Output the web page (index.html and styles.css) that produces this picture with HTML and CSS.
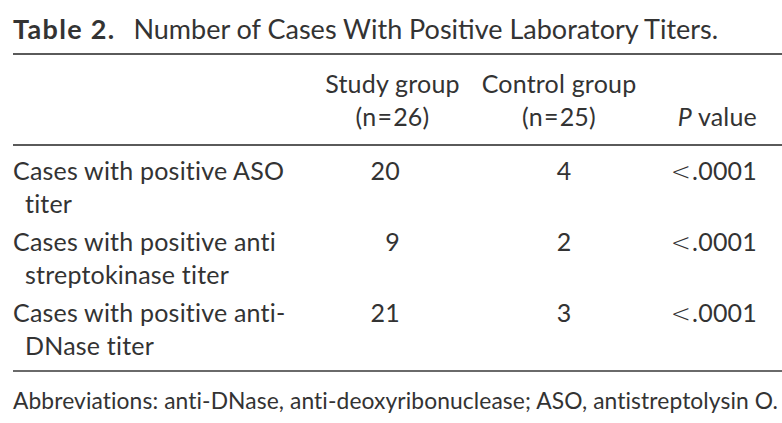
FILE: index.html
```html
<!DOCTYPE html>
<html>
<head>
<meta charset="utf-8">
<link rel="stylesheet" href="styles.css">
</head>
<body>
<div class="page">
  <div class="title"><span class="label">Table 2.</span>Number of Cases With Positive Laboratory Titers.</div>
  <div class="table">
    <div class="row head">
      <div class="c1"></div>
      <div class="c2 hcell">Study group<br>(n<span class="eq">=</span>26)</div>
      <div class="c3 hcell">Control group<br>(n<span class="eq">=</span>25)</div>
      <div class="c4 hcell pv"><i>P</i> value</div>
    </div>
    <div class="body">
      <div class="row">
        <div class="c1 lbl">Cases with positive ASO titer</div>
        <div class="c2 num">20</div>
        <div class="c3 num">4</div>
        <div class="c4 p"><span class="lt">&lt;</span>.0001</div>
      </div>
      <div class="row">
        <div class="c1 lbl">Cases with positive anti streptokinase titer</div>
        <div class="c2 num">9</div>
        <div class="c3 num">2</div>
        <div class="c4 p"><span class="lt">&lt;</span>.0001</div>
      </div>
      <div class="row">
        <div class="c1 lbl">Cases with positive anti-<br>DNase titer</div>
        <div class="c2 num">21</div>
        <div class="c3 num">3</div>
        <div class="c4 p"><span class="lt">&lt;</span>.0001</div>
      </div>
    </div>
  </div>
  <div class="foot">Abbreviations: anti-DNase, anti-deoxyribonuclease; ASO, antistreptolysin O.</div>
</div>
</body>
</html>
```
FILE: styles.css
```css
html, body {
  margin: 0;
  padding: 0;
  background: #ffffff;
  overflow: hidden;
}
.page {
  padding: 13px 0 0 13px;
  font-family: Lato, "Open Sans", sans-serif;
  color: #333333;
  font-size: 25px;
  letter-spacing: 0.2px;
}
.title {
  font-size: 27px;
  letter-spacing: 0;
  line-height: 32px;
  white-space: nowrap;
}
.label {
  font-weight: bold;
  letter-spacing: 1.3px;
  margin-right: 18px;
}
.table {
  margin-top: 8px;
  border-top: 2px solid #5a5a5a;
  border-bottom: 2px solid #6a6a6a;
}
.row {
  display: grid;
  grid-template-columns: 297px 165px 168px 1fr;
  line-height: 33px;
}
.head {
  padding: 12px 0 11px;
  border-bottom: 2px solid #5a5a5a;
}
.hcell {
  text-align: center;
  white-space: nowrap;
}
.pv {
  align-self: end;
  text-align: right;
  padding-right: 25px;
}
.eq {
  margin: 0 1px;
}
.body {
  padding: 8px 0 3px;
}
.body .row {
  padding-bottom: 5px;
}
.lbl {
  padding-left: 12px;
  text-indent: -12px;
}
.c2.num {
  text-align: right;
  padding-right: 75px;
}
.c3.num {
  text-align: center;
  padding-left: 10px;
}
.p {
  text-align: right;
  padding-right: 25px;
}
.lt {
  font-family: "DejaVu Sans", sans-serif;
  font-weight: 200;
  font-size: 24px;
  margin-right: 1px;
}
.foot {
  margin-top: 13px;
  font-size: 22.8px;
  letter-spacing: 0.1px;
  line-height: 30px;
  white-space: nowrap;
}
```
